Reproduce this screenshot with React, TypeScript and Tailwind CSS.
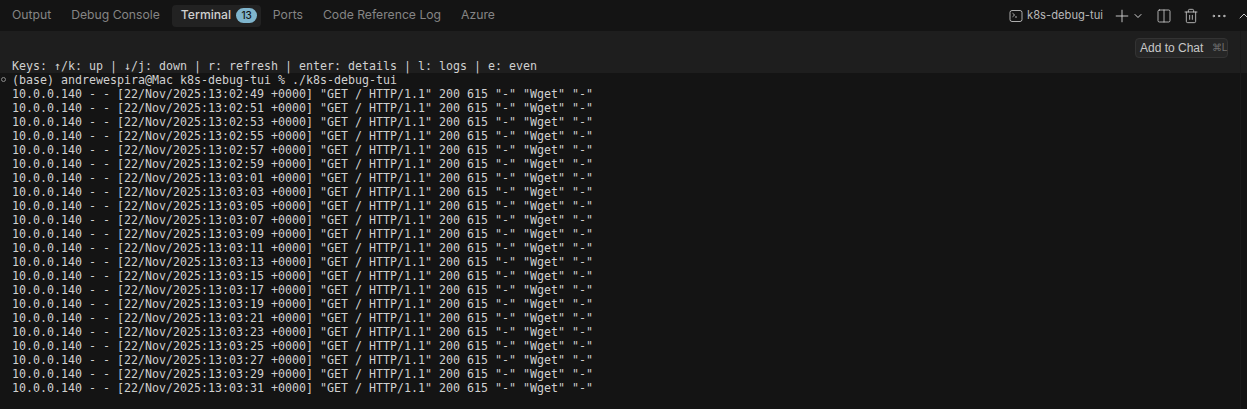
import React from 'react';
import { Plus, ChevronDown, Columns2, Trash2, Ellipsis, ChevronUp } from 'lucide-react';

const TABS = ['Output', 'Debug Console', 'Terminal', 'Ports', 'Code Reference Log', 'Azure'];

const TIMES = [
  '13:02:49', '13:02:51', '13:02:53', '13:02:55', '13:02:57', '13:02:59', '13:03:01', '13:03:03',
  '13:03:05', '13:03:07', '13:03:09', '13:03:11', '13:03:13', '13:03:15', '13:03:17', '13:03:19',
  '13:03:21', '13:03:23', '13:03:25', '13:03:27', '13:03:29', '13:03:31',
];

export default function App() {
  return (
    <div className="relative w-[1247px] h-[409px] overflow-hidden bg-[#141414] flex flex-col font-['Inter',sans-serif]">
      <header className="h-[31px] shrink-0 bg-[#141414] flex items-center justify-between pl-1">
        <nav className="flex items-center gap-[4px] text-[12.2px] text-[#858585]">
          {TABS.map(tab =>
            tab === 'Terminal' ? (
              <div key={tab} className="h-[22px] w-[89px] flex items-center gap-[5px] pl-[9px] rounded bg-[#222222] text-[#d0d0d0] font-medium">
                {tab}
                <span className="h-[15px] w-[21px] justify-center rounded-full bg-[#7fb5cd] text-[#141414] text-[10px] flex items-center">13</span>
              </div>
            ) : (
              <span key={tab} className="px-2">{tab}</span>
            )
          )}
        </nav>
        <div className="flex items-center text-[#d4d4d4]">
          <svg width="14" height="14" viewBox="0 0 14 14" fill="none" stroke="currentColor" strokeWidth="0.8" className="mr-[4px]">
            <rect x="1" y="1.5" width="12" height="11" rx="2" />
            <path d="M3.5 4.2 5.6 6 3.5 7.8M6 8h2" />
          </svg>
          <span className="text-[11.2px] text-[#b8b8b8] mr-[9px]">k8s-debug-tui</span>
          <Plus size={20} strokeWidth={1.1} />
          <ChevronDown size={12} strokeWidth={2} className="mr-[12px]" />
          <Columns2 size={16} strokeWidth={1.2} className="mr-[11px]" />
          <Trash2 size={16} strokeWidth={1.2} className="mr-[11px]" />
          <Ellipsis size={18} strokeWidth={1.2} className="mr-[8px]" />
          <ChevronUp size={16} strokeWidth={1.4} className="-mr-[5px]" />
        </div>
      </header>
      <section className="h-[42px] shrink-0 bg-[#1e1e1e] relative flex items-end pl-3 font-['DejaVu_Sans_Mono',monospace] text-[11.63px] leading-[14px] text-[#d0d0d0] whitespace-pre">
        <span>Keys: ↑/k: up | ↓/j: down | r: refresh | enter: details | l: logs | e: even</span>
        <div className="absolute right-[19px] top-[7px] h-[20px] w-[93px] flex items-center gap-[5px] pl-[4px] rounded border border-[#333333] bg-[#262626] text-[12px] text-[#c8c8c8] font-['Liberation_Sans',sans-serif]">
          Add to Chat <span className="text-[10px] text-[#6e6e6e]">⌘L</span>
        </div>
      </section>
      <main className="relative flex-1 pl-3 font-['DejaVu_Sans_Mono',monospace] text-[11.63px] leading-[14px] text-[#d0d0d0] whitespace-pre">
        <span className="absolute left-[1px] top-[4px] w-[5px] h-[5px] rounded-full border border-[#8a8a8a]" />
        <div>(base) andrewespira@Mac k8s-debug-tui % ./k8s-debug-tui</div>
        {TIMES.map(t => (
          <div key={t}>{`10.0.0.140 - - [22/Nov/2025:${t} +0000] "GET / HTTP/1.1" 200 615 "-" "Wget" "-"`}</div>
        ))}
      </main>
      <div className="absolute right-[6px] top-[31px] bottom-0 w-px bg-[#1a1a1a]" />
    </div>
  );
}
